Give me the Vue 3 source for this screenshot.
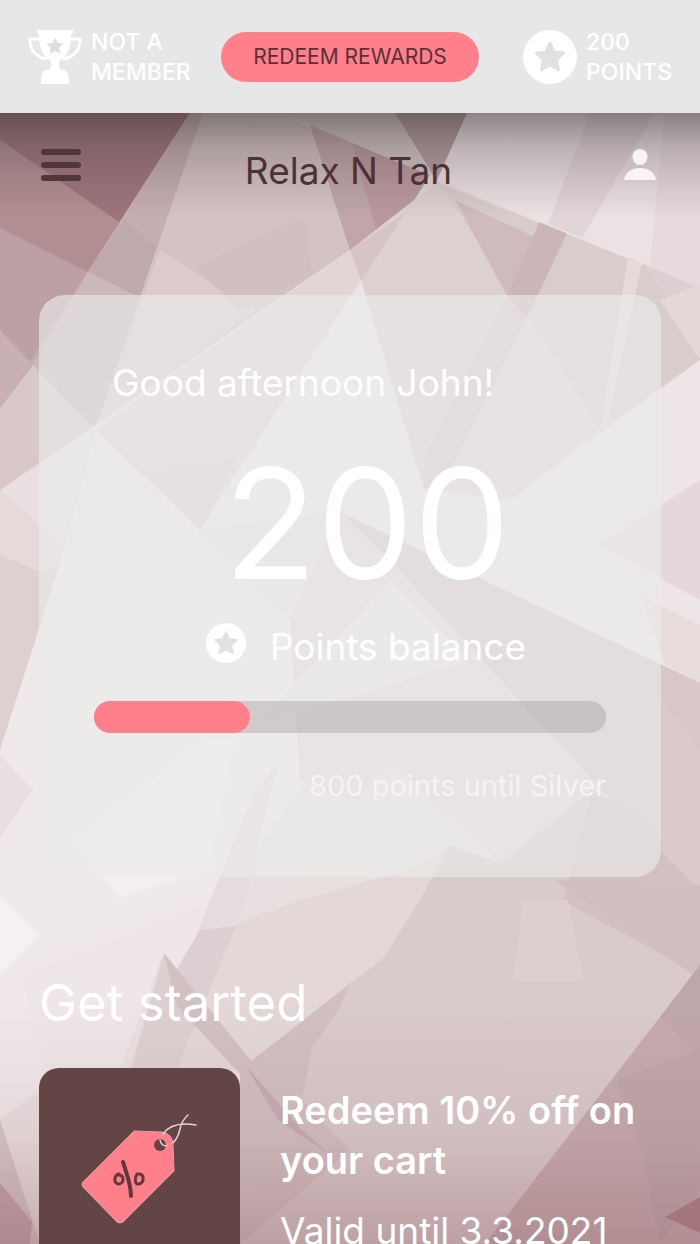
<script setup>
const member = { status: ['NOT A', 'MEMBER'], name: 'John', points: 200, nextTier: 'Silver', remaining: 800 }
const progress = 30.4
const starPath = 'M0 -15 L4.6 -5.4 L15 -4.4 L7.3 3 L9.3 14 L0 8.8 L-9.3 14 L-7.3 3 L-15 -4.4 L-4.6 -5.4 Z'

const facets = [
  { p: '0,113 190,113 0,408', c: '#9d757b' },
  { p: '0,140 135,233 118,260 0,408', c: '#b18e92' },
  { p: '0,228 88,272 0,408', c: '#bda0a4' },
  { p: '0,330 33,365 0,408', c: '#c9b0b3' },
  { p: '190,113 203,113 145,300 96,456 0,490 0,408', c: '#c4aeb0' },
  { p: '124,220 160,250 145,300 88,272', c: '#bfa9ab' },
  { p: '88,272 145,300 96,456 33,365', c: '#cbb8ba' },
  { p: '33,365 96,430 0,490 0,408', c: '#d9c8c8' },
  { p: '203,113 280,113 310,127 350,250 96,426', c: '#d4c3c4' },
  { p: '160,250 255,310 96,426', c: '#dccbcc' },
  { p: '195,267 290,222 306,222 312,275 240,310', c: '#d1bfc1' },
  { p: '310,125 430,175 405,215 350,250', c: '#b9999e' },
  { p: '310,125 352,143 377,233 350,250', c: '#c0a6a9' },
  { p: '280,113 395,113 432,176', c: '#d3c6c7' },
  { p: '395,113 467,113 437,182', c: '#b49da0' },
  { p: '350,250 0,490 0,1244 300,1244 600,430 430,380', c: '#e9dfe0' },
  { p: '437,182 350,250 424,490 600,430', c: '#ddd0d0' },
  { p: '405,213 350,250 361,281', c: '#d6c4c6' },
  { p: '437,182 700,288 700,360 600,430 530,320', c: '#dacccc' },
  { p: '455,200 552,245 512,305', c: '#cfbbbe' },
  { p: '540,220 567,233 527,318 508,295', c: '#cbb5b8' },
  { p: '508,295 527,318 455,465 424,490 425,455', c: '#d6c5c7' },
  { p: '527,318 600,430 510,500 440,490', c: '#dfd4d4' },
  { p: '467,113 700,113 700,288 437,180', c: '#ece1e3' },
  { p: '590,113 655,113 582,238 548,224', c: '#e2d6d8' },
  { p: '664,113 700,113 700,288 650,266', c: '#e6dadc' },
  { p: '628,257 642,263 606,430 600,430', c: '#e7d9da' },
  { p: '642,263 700,288 700,340', c: '#ddcfd1' },
  { p: '660,300 700,285 700,360', c: '#e5d7d7' },
  { p: '350,250 361,280 200,530 96,430', c: '#e1d5d6' },
  { p: '361,280 424,490 340,512 200,530', c: '#ece5e5' },
  { p: '96,430 200,530 290,620 210,760 50,600', c: '#ece5e5' },
  { p: '240,455 200,530 140,470', c: '#ddd1d1' },
  { p: '700,360 510,500 424,490 340,512 700,683', c: '#eee5e6' },
  { p: '700,480 600,545 700,600', c: '#e5d7da' },
  { p: '640,595 700,625 700,683 665,665', c: '#e9dcdd' },
  { p: '0,490 65,548 0,750', c: '#e5d9da' },
  { p: '0,555 40,572 62,562 0,750', c: '#decfd1' },
  { p: '65,548 0,750 0,980 220,900 350,720 290,620 200,560', c: '#f0e9e9' },
  { p: '205,738 75,840 118,898 210,870 235,738', c: '#f4eef0' },
  { p: '0,755 33,790 0,838', c: '#eadfe0' },
  { p: '0,980 0,1120 80,1060 160,960 220,900', c: '#f0e8e9' },
  { p: '0,895 40,935 0,975', c: '#f6f1f1' },
  { p: '340,512 700,683 700,960 555,880 400,640', c: '#d8c6c8' },
  { p: '340,512 390,560 662,855 500,863 300,780 290,620', c: '#e3d8d8' },
  { p: '390,582 470,660 340,700 260,720', c: '#ebe3e3' },
  { p: '390,760 500,864 410,870 280,900', c: '#e8dfdf' },
  { p: '555,878 590,790 640,815 700,885 700,975 560,900', c: '#d3c0c2' },
  { p: '662,853 700,890 700,750 662,700', c: '#dbcaca' },
  { p: '500,863 592,790 562,905 416,905 450,845', c: '#d9cacb' },
  { p: '450,845 420,900 382,960 350,983 240,1070 130,1070 163,955 195,940 300,900 410,870', c: '#e3d7d8' },
  { p: '210,900 195,940 175,980 163,953 120,1070 60,1110 20,975', c: '#efe6e7' },
  { p: '300,738 278,765 245,900 236,926 195,940 210,900 255,790', c: '#e6dcdd' },
  { p: '200,930 236,926 172,1080 132,1068 164,953 176,970', c: '#ddcfd1' },
  { p: '164,953 252,1062 240,1074 176,1005', c: '#d2c0c2' },
  { p: '420,900 560,900 700,975 485,1244 240,1244 240,1070 350,983 382,960', c: '#d9cacb' },
  { p: '555,900 523,900 513,981 584,981 568,900', c: '#ddcfcf' },
  { p: '555,880 700,885 700,965 692,974', c: '#d1bec1' },
  { p: '240,1070 350,984 338,1010 312,1048 302,1100 350,1150 240,1244', c: '#d1bfc1' },
  { p: '700,965 700,1244 485,1244', c: '#c5aaad' },
  { p: '660,1018 700,1055 700,965', c: '#bfa6a9' },
  { p: '245,1065 278,1120 330,1155 300,1128', c: '#c5acaf' },
  { p: '616,1080 700,1050 700,1190 660,1244 642,1150', c: '#bea6a9' },
  { p: '0,1120 40,1244 0,1244', c: '#d7c5c8' },
  { p: '0,1183 32,1222 30,1244 0,1244', c: '#c1a4a9' },
  { p: '665,1217 700,1197 700,1233', c: '#a97f84' },
]
</script>

<template>
  <div class="app">
    <svg class="backdrop" viewBox="0 0 700 1244" preserveAspectRatio="none" aria-hidden="true">
      <defs>
        <linearGradient id="shadeTop" x1="0" y1="0" x2="0" y2="1">
          <stop offset="0" stop-color="#342c2c" stop-opacity="0.52" />
          <stop offset="0.35" stop-color="#453a3b" stop-opacity="0.27" />
          <stop offset="1" stop-color="#5a484a" stop-opacity="0" />
        </linearGradient>
        <linearGradient id="shadeBottom" x1="0" y1="0" x2="0" y2="1">
          <stop offset="0" stop-color="#9a6970" stop-opacity="0" />
          <stop offset="0.55" stop-color="#9a6970" stop-opacity="0.12" />
          <stop offset="1" stop-color="#95666d" stop-opacity="0.42" />
        </linearGradient>
      </defs>
      <rect width="700" height="1244" fill="#e4d9da" />
      <polygon v-for="(f, i) in facets" :key="i" :points="f.p" :fill="f.c" />
      <rect y="113" width="700" height="105" fill="url(#shadeTop)" />
      <rect y="1000" width="700" height="244" fill="url(#shadeBottom)" />
    </svg>

    <div class="rewards-bar">
      <div class="stat">
        <svg class="stat-icon" viewBox="0 0 54 54" aria-hidden="true">
          <path fill="#fff" d="M9 0H45V3L43 5C43 17 40 25 33 30C30 32 30 37 33 40H37L40 43V47H41V54H13V47H14V43L17 40H21C24 37 24 32 21 30C14 25 11 17 11 5L9 3Z" />
          <path fill="none" stroke="#fff" stroke-width="3" stroke-linejoin="round" d="M12 9H2C2 20 8 27 19 29M42 9H52C52 20 46 27 35 29" />
          <path :d="starPath" transform="translate(27 16) scale(.56)" fill="#dedede" />
        </svg>
        <span>{{ member.status[0] }}<br />{{ member.status[1] }}</span>
      </div>
      <button class="redeem" type="button">REDEEM REWARDS</button>
      <div class="stat stat-end">
        <svg class="stat-icon" viewBox="0 0 54 54" aria-hidden="true">
          <circle cx="27" cy="27" r="27" fill="#fff" />
          <path :d="starPath" transform="translate(27 27) scale(.92)" fill="#e1e1e1" stroke="#e1e1e1" stroke-width="3" stroke-linejoin="round" />
        </svg>
        <span>{{ member.points }}<br />POINTS</span>
      </div>
    </div>

    <header class="header">
      <button class="icon-button" type="button" aria-label="Menu">
        <svg width="40" height="32" viewBox="0 0 40 32" aria-hidden="true">
          <path d="M3 3H37M3 16H37M3 29H37" stroke="#51363a" stroke-width="6" stroke-linecap="round" />
        </svg>
      </button>
      <h1>Relax N Tan</h1>
      <button class="icon-button profile" type="button" aria-label="Profile">
        <svg width="32" height="32" viewBox="0 0 32 32" aria-hidden="true">
          <ellipse cx="16" cy="8" rx="7.5" ry="8" fill="#f8f3f4" />
          <path d="M0 31C1 23 8 19 16 19S31 23 32 31Z" fill="#f8f3f4" />
        </svg>
      </button>
    </header>

    <main>
      <section class="card">
        <p class="greeting">Good afternoon {{ member.name }}!</p>
        <p class="total">{{ member.points }}</p>
        <p class="balance">
          <svg width="40" height="40" viewBox="0 0 54 54" aria-hidden="true">
            <circle cx="27" cy="27" r="27" fill="#fff" />
            <path :d="starPath" transform="translate(27 27)" fill="#e4e1e1" stroke="#e4e1e1" stroke-width="2" stroke-linejoin="round" />
          </svg>
          <span>Points balance</span>
        </p>
        <div class="track" role="progressbar" aria-label="Progress to next tier" :aria-valuenow="member.points" aria-valuemin="0" aria-valuemax="1000">
          <div class="fill" :style="{ width: progress + '%' }"></div>
        </div>
        <p class="until">{{ member.remaining }} points until {{ member.nextTier }}</p>
      </section>

      <h2>Get started</h2>
      <article class="offer">
        <div class="tile">
          <svg width="118" height="112" viewBox="0 0 118 112" aria-hidden="true">
            <path d="M53 17L81 18Q92 20 92 31L93 57L42 108Q39 110 36 108L2 73Q0 70 2 68Z" fill="#ff7f8a" stroke="#d9a3a6" stroke-width="1" stroke-linejoin="round" />
            <circle cx="79" cy="31" r="6" fill="#644546" />
            <path d="M79 26Q80 32 86 32M82 20Q91 7 115 11M107 1Q101 6 99 15T92 29" fill="none" stroke="#e3d3d2" stroke-width="1.5" stroke-linecap="round" />
            <path d="M42 48C45 58 50 70 50 82" fill="none" stroke="#60383c" stroke-width="4" stroke-linecap="round" />
            <path d="M38 60C33 61 32 70 38 70C43 70 44 60 37 61M56 60C53 65 54 71 58 70C64 69 63 59 58 60" fill="none" stroke="#60383c" stroke-width="3" stroke-linecap="round" />
          </svg>
        </div>
        <div class="offer-text">
          <h3>Redeem 10% off on your cart</h3>
          <p>Valid until 3.3.2021</p>
        </div>
      </article>
    </main>
  </div>
</template>

<style>
body {
  margin: 0;
}
</style>

<style scoped>
.app {
  position: relative;
  height: 100vh;
  overflow: hidden;
  font-family: Inter, "Liberation Sans", sans-serif;
  color: #fff;
}
.backdrop {
  position: absolute;
  inset: 0;
  width: 100%;
  height: 100%;
  z-index: -1;
}
h1, h2, h3, p {
  margin: 0;
  font-weight: 400;
}
button {
  font: inherit;
  border: 0;
  padding: 0;
  cursor: pointer;
}
.rewards-bar {
  display: grid;
  grid-template-columns: 1fr auto 1fr;
  align-items: center;
  box-sizing: border-box;
  height: 113px;
  padding: 0 28px;
  background: #e7e7e7;
}
.stat {
  display: flex;
  align-items: center;
  gap: 9px;
  font-size: 23px;
  font-weight: 500;
  line-height: 30px;
  white-space: nowrap;
}
.stat-end {
  justify-content: flex-end;
}
.stat-icon {
  flex: none;
  width: 54px;
  height: 54px;
}
.redeem {
  height: 50px;
  padding: 0 32px;
  border-radius: 25px;
  background: #ff7f8a;
  color: #593036;
  font-size: 21px;
}
.header {
  display: grid;
  grid-template-columns: 1fr auto 1fr;
  align-items: center;
  height: 104px;
  padding: 0 44px 0 41px;
  margin-bottom: 78px;
}
.header h1 {
  color: #4c3236;
  font-size: 37px;
  line-height: 48px;
  padding-top: 12px;
}
.icon-button {
  display: flex;
  background: none;
}
.profile {
  justify-content: flex-end;
}
main {
  padding: 0 39px;
}
.card {
  padding: 64px 55px 72px;
  border-radius: 26px;
  background: rgba(235, 234, 234, 0.64);
}
.greeting {
  padding-left: 18px;
  font-size: 37px;
  line-height: 48px;
}
.total {
  padding-left: 34px;
  margin-top: 22px;
  font-size: 153px;
  line-height: 190px;
  text-align: center;
}
.balance {
  display: flex;
  align-items: center;
  justify-content: center;
  gap: 24px;
  padding-left: 32px;
  font-size: 37px;
  line-height: 48px;
}
.balance span {
  padding-top: 4px;
  margin-bottom: -4px;
}
.track {
  height: 32px;
  margin-top: 34px;
  border-radius: 16px;
  background: rgba(100, 96, 98, 0.22);
}
.fill {
  height: 32px;
  border-radius: 16px;
  background: #ff7f8a;
}
.until {
  margin-top: 34px;
  color: #f7f2f3;
  font-size: 29px;
  line-height: 38px;
  text-align: right;
}
h2 {
  margin-top: 94px;
  font-size: 51px;
  line-height: 64px;
}
.offer {
  display: flex;
  gap: 40px;
  margin-top: 33px;
}
.tile {
  display: flex;
  align-items: center;
  justify-content: center;
  flex: none;
  width: 201px;
  height: 204px;
  border-radius: 20px;
  background: #644546;
}
.offer-text {
  padding-top: 17px;
}
.offer h3 {
  font-size: 38px;
  font-weight: 600;
  line-height: 50px;
}
.offer p {
  margin-top: 23px;
  font-size: 37px;
  line-height: 46px;
}
</style>
